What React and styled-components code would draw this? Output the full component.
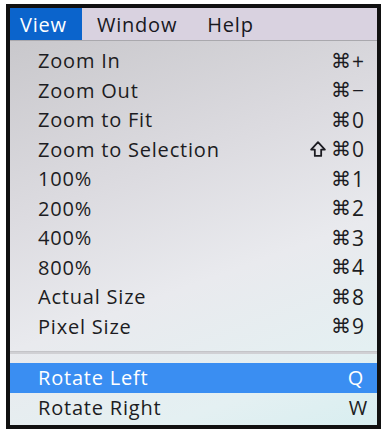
import React from "react";
import styled, { createGlobalStyle } from "styled-components";

const Global = createGlobalStyle`
  html, body { margin: 0; padding: 0; background: #fff; }
  body { font-family: "Open Sans", "Liberation Sans", Arial, sans-serif; }
`;

const Frame = styled.div`
  margin: 4px 0 0 6px;
  width: 367px;
  border: 4px solid #111;
  box-sizing: content-box;
  height: 417px;
  display: flex;
  flex-direction: column;
  overflow: hidden;
`;

const MenuBar = styled.div`
  display: flex;
  height: 32px;
  background: #d9d2e0;
  border-bottom: 1px solid #a9a8ad;
  flex-shrink: 0;
`;

const BarItem = styled.div`
  display: flex;
  align-items: center;
  padding-left: ${(p) => (p.$first ? "10px" : "15px")};
  padding-right: 15px;
  font-size: 20px;
  letter-spacing: 0.8px;
  color: ${(p) => (p.$active ? "#fff" : "#18181e")};
  background: ${(p) => (p.$active ? "#0b64cc" : "transparent")};
`;

const Body = styled.div`
  flex: 1;
  display: flex;
  flex-direction: column;
  padding-top: 5px;
  background: linear-gradient(160deg, #c9c8cc 0%, #dcdbe0 35%, #e9eaee 60%, #e4f0f2 85%, #d8eef0 100%);
`;

const Row = styled.div`
  display: flex;
  align-items: center;
  justify-content: space-between;
  height: 29.5px;
  padding: 0 ${(p) => p.$pr || "13px"} 0 28px;
  font-size: 20px;
  letter-spacing: 0.8px;
  color: ${(p) => (p.$active ? "#fff" : "#1c1c22")};
  background: ${(p) => (p.$active ? "#3a8ef2" : "transparent")};
`;

const Shortcut = styled.span`
  display: flex;
  align-items: center;
  gap: 1px;
  letter-spacing: 0;
  font-size: 21px;
`;

const Cmd = styled.span`
  font-family: "DejaVu Sans", sans-serif;
  font-size: 20px;
`;

const Separator = styled.div`
  height: 2px;
  background: #d0d0d4;
  border-top: 1px solid #c4c4c8;
  margin: 10px 0 9px;
`;

const ShiftIcon = () => (
  <svg width="18" height="18" viewBox="0 0 17 17" style={{ marginRight: 3 }}>
    <path d="M8.5 2 L15 9 H11.5 V15 H5.5 V9 H2 Z" fill="none" stroke="#1c1c22" strokeWidth="1.7" strokeLinejoin="round" />
  </svg>
);

const items = [
  ["Zoom In", "+"],
  ["Zoom Out", "−"],
  ["Zoom to Fit", "0"],
  ["Zoom to Selection", "0", true],
  ["100%", "1"],
  ["200%", "2"],
  ["400%", "3"],
  ["800%", "4"],
  ["Actual Size", "8"],
  ["Pixel Size", "9"],
];

export default function App() {
  return (
    <>
      <Global />
      <Frame>
        <MenuBar>
          <BarItem $active $first>View</BarItem>
          <BarItem>Window</BarItem>
          <BarItem>Help</BarItem>
        </MenuBar>
        <Body>
          {items.map(([label, key, shift]) => (
            <Row key={label}>
              <span>{label}</span>
              <Shortcut>
                {shift && <ShiftIcon />}
                <Cmd>⌘</Cmd>
                <span>{key}</span>
              </Shortcut>
            </Row>
          ))}
          <Separator />
          <Row $active>
            <span>Rotate Left</span>
            <span>Q</span>
          </Row>
          <Row $pr="9px">
            <span>Rotate Right</span>
            <span>W</span>
          </Row>
        </Body>
      </Frame>
    </>
  );
}
